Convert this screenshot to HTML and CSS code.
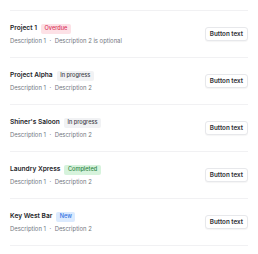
FILE: index.html
```html
<!DOCTYPE html>
<html>
<head>
<meta charset="utf-8">
<link rel="stylesheet" href="styles.css">
</head>
<body>
<ul class="list">
  <li class="item">
    <div class="info">
      <div class="title-row"><span class="title">Project 1</span><span class="badge badge-red">Overdue</span></div>
      <div class="desc"><span>Description 1</span><span class="dot">·</span><span>Description 2 is optional</span></div>
    </div>
    <button class="btn">Button text</button>
  </li>
  <li class="item">
    <div class="info">
      <div class="title-row"><span class="title">Project Alpha</span><span class="badge badge-gray">In progress</span></div>
      <div class="desc"><span>Description 1</span><span class="dot">·</span><span>Description 2</span></div>
    </div>
    <button class="btn">Button text</button>
  </li>
  <li class="item">
    <div class="info">
      <div class="title-row"><span class="title">Shiner's Saloon</span><span class="badge badge-gray">In progress</span></div>
      <div class="desc"><span>Description 1</span><span class="dot">·</span><span>Description 2</span></div>
    </div>
    <button class="btn">Button text</button>
  </li>
  <li class="item">
    <div class="info">
      <div class="title-row"><span class="title">Laundry Xpress</span><span class="badge badge-green">Completed</span></div>
      <div class="desc"><span>Description 1</span><span class="dot">·</span><span>Description 2</span></div>
    </div>
    <button class="btn">Button text</button>
  </li>
  <li class="item">
    <div class="info">
      <div class="title-row"><span class="title">Key West Bar</span><span class="badge badge-blue">New</span></div>
      <div class="desc"><span>Description 1</span><span class="dot">·</span><span>Description 2</span></div>
    </div>
    <button class="btn">Button text</button>
  </li>
</ul>
</body>
</html>
```
FILE: styles.css
```css
html, body {
  margin: 0;
  padding: 0;
  background: #ffffff;
}
body {
  padding: 10px 10px 0 10px;
  font-family: Inter, "Liberation Sans", sans-serif;
}
.list {
  list-style: none;
  margin: 0;
  padding: 0;
  border-top: 1px solid #f1f1f3;
}
.item {
  display: flex;
  align-items: center;
  justify-content: space-between;
  padding: 12px 0 12px 0;
  height: 22px;
  border-bottom: 1px solid #f1f1f3;
}
.title-row {
  display: flex;
  align-items: center;
  gap: 4px;
  height: 11px;
}
.title {
  font-size: 6.6px;
  font-weight: 600;
  color: #25262a;
  line-height: 11px;
}
.badge {
  font-size: 5.6px;
  font-weight: 500;
  line-height: 7px;
  padding: 1.5px 3.5px;
  border-radius: 2px;
}
.badge-red { background: #fde1e6; color: #d9375a; }
.badge-gray { background: #f1f2f4; color: #3f4249; }
.badge-green { background: #d6f3dc; color: #2f8646; }
.badge-blue { background: #dbeafe; color: #2f6fe0; }
.desc {
  margin-top: 2px;
  font-size: 5.9px;
  line-height: 9px;
  color: #73777f;
  display: flex;
}
.dot {
  margin: 0 3.5px;
}
.btn {
  font-family: Inter, "Liberation Sans", sans-serif;
  font-size: 6.3px;
  font-weight: 600;
  color: #2b2d31;
  background: #ffffff;
  border: 1px solid #e7e8eb;
  border-radius: 3px;
  line-height: 9px;
  padding: 1.5px 4px;
  box-shadow: 0 1px 1px rgba(0,0,0,0.04);
  margin: 0;
}
```
